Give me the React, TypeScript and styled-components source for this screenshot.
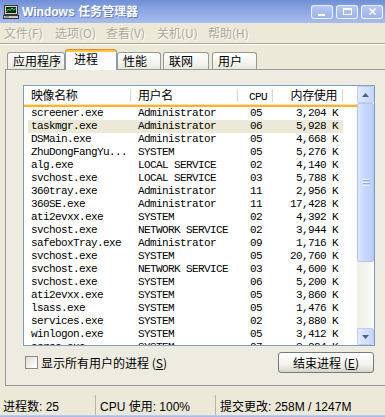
import React from "react";
import styled, { createGlobalStyle, css } from "styled-components";

const Global = createGlobalStyle`
  html, body { margin: 0; padding: 0; background: #ece9d8; }
  body { width: 385px; height: 417px; overflow: hidden; }
`;

const CJK = `"Noto Sans CJK SC", sans-serif`;
const UI = `"Liberation Sans", "Noto Sans CJK SC", sans-serif`;
const MONO = `"Liberation Mono", "Noto Sans CJK SC", monospace`;

const Window = styled.div`
  width: 385px;
  height: 417px;
  overflow: hidden;
  display: flex;
  flex-direction: column;
  background: #ece9d8;
  font-family: ${UI};
  font-size: 12px;
  color: #000;
`;

const TitleBar = styled.div`
  height: 23px;
  flex: none;
  display: flex;
  align-items: center;
  padding: 0 2px 0 3px;
  background: linear-gradient(to bottom, #6e8ed6 0%, #84a0df 30%, #98b0e8 70%, #a8bdec 100%);
`;

const TitleText = styled.div`
  margin-left: 3px;
  color: #fff;
  font-weight: bold;
  font-size: 12px;
  line-height: 14px;
  font-family: ${UI};
  text-shadow: 1px 1px 0 rgba(40, 60, 140, 0.45);
  white-space: nowrap;
`;

const CaptionButtons = styled.div`
  margin-left: auto;
  display: flex;
  gap: 3px;
`;

const CaptionButton = styled.div`
  width: 22px;
  height: 14px;
  box-sizing: border-box;
  border: 1px solid rgba(255, 255, 255, 0.8);
  border-radius: 3px;
  background: linear-gradient(to bottom, #b6c8f2, #9bb3ea);
  display: flex;
  align-items: center;
  justify-content: center;
`;

const MenuBar = styled.div`
  height: 20px;
  flex: none;
  display: flex;
  align-items: center;
`;

const MenuItem = styled.div`
  width: 51px;
  padding-left: 4px;
  box-sizing: border-box;
  font-family: ${CJK};
  font-size: 12px;
  line-height: 16px;
  color: #aca899;
  text-shadow: 1px 1px 0 #ffffff;
  white-space: nowrap;
`;

const MenuSep = styled.div`
  flex: none;
  height: 0;
  border-top: 1px solid #aca899;
  border-bottom: 1px solid #ffffff;
`;

const Body = styled.div`
  flex: none;
  display: flex;
  flex-direction: column;
  padding: 4px 0 0 5px;
`;

const TabsRow = styled.div`
  display: flex;
  align-items: flex-end;
  height: 21px;
  padding-left: 2px;
  position: relative;
  z-index: 1;
`;

const Tab = styled.div<{ $active?: boolean; $w: number; $ml?: number }>`
  box-sizing: border-box;
  width: ${(p) => p.$w}px;
  margin-left: ${(p) => p.$ml ?? 0}px;
  font-family: ${CJK};
  font-size: 12px;
  color: #000;
  white-space: nowrap;
  border: 1px solid #919b9c;
  border-bottom: none;
  border-radius: 3px 3px 0 0;
  ${(p) =>
    p.$active
      ? css`
          height: 21px;
          padding: 2px 0 0 8px;
          line-height: 14px;
          border-top-color: #e68b2c;
          background: linear-gradient(to bottom, #ffc73c 0, #ffc73c 2px, #fcfcfe 2px);
        `
      : css`
          height: 17px;
          margin-bottom: 1px;
          padding-left: 5px;
          line-height: 16px;
          background: linear-gradient(to bottom, #ffffff 0%, #f6f5f0 50%, #e9e7de 100%);
        `}
`;

const Panel = styled.div`
  box-sizing: border-box;
  width: 383px;
  height: 317px;
  margin-top: -1px;
  border: 1px solid #919b9c;
  background: #eeece1;
  padding: 15px 0 0 17px;
  display: flex;
  flex-direction: column;
`;

const ListView = styled.div`
  box-sizing: border-box;
  width: 352px;
  height: 261px;
  border: 1px solid #7f9db9;
  background: #ffffff;
  display: flex;
  overflow: hidden;
`;

const ListMain = styled.div`
  flex: 1;
  display: flex;
  flex-direction: column;
  overflow: hidden;
`;

const Header = styled.div`
  flex: none;
  height: 18px;
  display: flex;
  background: #ffffff;
`;

const HeaderCell = styled.div<{ $w?: number; $pl?: number; $pr?: number; $right?: boolean; $last?: boolean }>`
  position: relative;
  box-sizing: border-box;
  ${(p) => (p.$w ? `width: ${p.$w}px; flex: none;` : `flex: 1;`)}
  padding-left: ${(p) => p.$pl ?? 0}px;
  padding-right: ${(p) => p.$pr ?? 0}px;
  text-align: ${(p) => (p.$right ? "right" : "left")};
  font-family: ${CJK};
  font-size: 12px;
  line-height: 18px;
  letter-spacing: -0.4px;
  white-space: nowrap;
  ${(p) =>
    !p.$last &&
    css`
      &::after {
        content: "";
        position: absolute;
        right: 0;
        top: 3px;
        bottom: 2px;
        width: 1px;
        background: #d9d6cb;
      }
    `}
`;

const MonoText = styled.span`
  font-family: ${MONO};
  font-size: 11px;
  letter-spacing: -0.6px;
`;

const HeaderLine = styled.div`
  flex: none;
  height: 3px;
  background: linear-gradient(to bottom, #fde1a0 0, #fde1a0 1px, #f7b434 1px);
`;

const Row = styled.div<{ $selected?: boolean }>`
  flex: none;
  display: grid;
  grid-template-columns: 103px 107px 35px 70px;
  width: 315px;
  margin-left: 4px;
  height: 13px;
  background: ${(p) => (p.$selected ? "#ece9d8" : "transparent")};
`;

const Cell = styled.div<{ $pl?: number; $pr?: number; $right?: boolean }>`
  padding-left: ${(p) => p.$pl ?? 0}px;
  padding-right: ${(p) => p.$pr ?? 0}px;
  text-align: ${(p) => (p.$right ? "right" : "left")};
  font-family: ${MONO};
  font-size: 11px;
  letter-spacing: -0.6px;
  line-height: 13px;
  white-space: nowrap;
  overflow: hidden;
`;

const ScrollBar = styled.div`
  flex: none;
  width: 17px;
  display: flex;
  flex-direction: column;
  background: linear-gradient(to right, #eeede5, #fcfcf8);
`;

const ScrollButton = styled.div`
  flex: none;
  box-sizing: border-box;
  width: 17px;
  height: 17px;
  border: 1px solid #bccdf3;
  border-radius: 2px;
  background: linear-gradient(to right, #e2ebfe, #c6d6fc);
  display: flex;
  align-items: center;
  justify-content: center;
`;

const Thumb = styled.div`
  flex: none;
  box-sizing: border-box;
  height: 159px;
  border: 1px solid #b2c6f3;
  border-radius: 2px;
  background: linear-gradient(to right, #dfe8fd 0%, #c9d8fc 40%, #bccefb 100%);
  display: flex;
  align-items: center;
  justify-content: center;
`;

const Track = styled.div`
  flex: 1;
`;

const BottomRow = styled.div`
  width: 351px;
  margin-top: 6px;
  height: 21px;
  display: flex;
  align-items: center;
  justify-content: space-between;
`;

const CheckLabel = styled.div`
  display: flex;
  align-items: center;
  gap: 3px;
  margin-left: 2px;
  font-family: ${CJK};
  font-size: 12px;
  line-height: 14px;
  white-space: nowrap;
`;

const CheckBox = styled.div`
  width: 13px;
  height: 13px;
  box-sizing: border-box;
  border: 1px solid #8a8b8d;
  background: linear-gradient(135deg, #dcdcd6 0%, #f4f4f1 60%, #ffffff 100%);
`;

const Key = styled.span`
  text-decoration: underline;
`;

const Button = styled.div`
  box-sizing: border-box;
  width: 96px;
  height: 21px;
  border: 1px solid #767b82;
  border-radius: 3px;
  background: linear-gradient(to bottom, #ffffff 0%, #f5f4ef 55%, #e4e2d8 85%, #d6d3c6 100%);
  display: flex;
  align-items: center;
  justify-content: center;
  font-family: ${CJK};
  font-size: 12px;
  line-height: 14px;
  white-space: nowrap;
`;

const StatusBar = styled.div`
  flex: none;
  height: 29px;
  box-sizing: border-box;
  padding-top: 9px;
  display: flex;
`;

const StatusPane = styled.div<{ $w?: number; $pl: number; $sep?: boolean }>`
  box-sizing: border-box;
  ${(p) => (p.$w ? `width: ${p.$w}px; flex: none;` : `flex: 1;`)}
  padding-left: ${(p) => p.$pl}px;
  height: 20px;
  display: flex;
  align-items: center;
  font-family: ${UI};
  font-size: 12px;
  white-space: nowrap;
  border-right: ${(p) => (p.$sep ? "1px solid #b9b6a6" : "none")};
`;

const FrameBottom = styled.div`
  flex: none;
  height: 2px;
  background: linear-gradient(to bottom, #c3d2f3, #9fb5e9);
`;

type Proc = [string, string, string, string];

const procs: Proc[] = [
  ["screener.exe", "Administrator", "05", "3,204 K"],
  ["taskmgr.exe", "Administrator", "06", "5,928 K"],
  ["DSMain.exe", "Administrator", "05", "4,668 K"],
  ["ZhuDongFangYu...", "SYSTEM", "05", "5,276 K"],
  ["alg.exe", "LOCAL SERVICE", "02", "4,140 K"],
  ["svchost.exe", "LOCAL SERVICE", "03", "5,788 K"],
  ["360tray.exe", "Administrator", "11", "2,956 K"],
  ["360SE.exe", "Administrator", "11", "17,428 K"],
  ["ati2evxx.exe", "SYSTEM", "02", "4,392 K"],
  ["svchost.exe", "NETWORK SERVICE", "02", "3,944 K"],
  ["safeboxTray.exe", "Administrator", "09", "1,716 K"],
  ["svchost.exe", "SYSTEM", "05", "20,760 K"],
  ["svchost.exe", "NETWORK SERVICE", "03", "4,600 K"],
  ["svchost.exe", "SYSTEM", "06", "5,200 K"],
  ["ati2evxx.exe", "SYSTEM", "05", "3,860 K"],
  ["lsass.exe", "SYSTEM", "05", "1,476 K"],
  ["services.exe", "SYSTEM", "02", "3,880 K"],
  ["winlogon.exe", "SYSTEM", "05", "3,412 K"],
  ["csrss.exe", "SYSTEM", "07", "3,924 K"],
];

const AppIcon = () => (
  <svg width="16" height="16" viewBox="0 0 16 16">
    <rect x="1.5" y="1.5" width="13" height="9" fill="#d2d0c8" stroke="#3a3a3a" />
    <rect x="3" y="3" width="10" height="6" fill="#0a2a14" />
    <polyline points="3.5,7.5 5.5,5 7,6.5 9,4 10.5,6 12.5,4.5" fill="none" stroke="#39f06a" strokeWidth="1" />
    <rect x="0.5" y="11.5" width="15" height="3" fill="#c9c9c4" stroke="#3a3a3a" />
    <rect x="2" y="12.5" width="4" height="1" fill="#6a6a6a" />
  </svg>
);

export default function App() {
  return (
    <>
      <Global />
      <Window>
        <TitleBar>
          <AppIcon />
          <TitleText>Windows 任务管理器</TitleText>
          <CaptionButtons>
            <CaptionButton>
              <svg width="20" height="12" viewBox="0 0 20 12">
                <rect x="6" y="8" width="7" height="2" fill="#fff" />
              </svg>
            </CaptionButton>
            <CaptionButton>
              <svg width="20" height="12" viewBox="0 0 20 12">
                <rect x="6.5" y="2.5" width="8" height="6" fill="none" stroke="#fff" />
                <rect x="6" y="2" width="9" height="2" fill="#fff" />
              </svg>
            </CaptionButton>
            <CaptionButton>
              <svg width="20" height="12" viewBox="0 0 20 12">
                <path d="M7.5 2.5 L13.5 8.5 M13.5 2.5 L7.5 8.5" stroke="#fff" strokeWidth="1.6" />
              </svg>
            </CaptionButton>
          </CaptionButtons>
        </TitleBar>

        <MenuBar>
          <MenuItem>文件(F)</MenuItem>
          <MenuItem>选项(O)</MenuItem>
          <MenuItem>查看(V)</MenuItem>
          <MenuItem>关机(U)</MenuItem>
          <MenuItem>帮助(H)</MenuItem>
        </MenuBar>
        <MenuSep />

        <Body>
          <TabsRow>
            <Tab $w={58}>应用程序</Tab>
            <Tab $w={52} $active>进程</Tab>
            <Tab $w={44}>性能</Tab>
            <Tab $w={46} $ml={2}>联网</Tab>
            <Tab $w={45} $ml={3}>用户</Tab>
          </TabsRow>
          <Panel>
            <ListView>
              <ListMain>
                <Header>
                  <HeaderCell $w={107} $pl={7}>映像名称</HeaderCell>
                  <HeaderCell $w={107} $pl={7}>用户名</HeaderCell>
                  <HeaderCell $w={35} $pl={11}>
                    <MonoText>CPU</MonoText>
                  </HeaderCell>
                  <HeaderCell $w={70} $pr={6} $right>内存使用</HeaderCell>
                  <HeaderCell $last />
                </Header>
                <HeaderLine />
                {procs.map((p, i) => (
                  <Row key={i} $selected={i === 1}>
                    <Cell $pl={3}>{p[0]}</Cell>
                    <Cell $pl={7}>{p[1]}</Cell>
                    <Cell $pl={12}>{p[2]}</Cell>
                    <Cell $pr={5} $right>{p[3]}</Cell>
                  </Row>
                ))}
              </ListMain>
              <ScrollBar>
                <ScrollButton>
                  <svg width="7" height="4" viewBox="0 0 7 4">
                    <polygon points="0,4 3.5,0 7,4" fill="#4d6185" />
                  </svg>
                </ScrollButton>
                <Thumb>
                  <svg width="8" height="7" viewBox="0 0 8 7">
                    <rect x="0" y="0" width="7" height="1" fill="#eef4fe" />
                    <rect x="1" y="1" width="7" height="1" fill="#8aa9ea" />
                    <rect x="0" y="3" width="7" height="1" fill="#eef4fe" />
                    <rect x="1" y="4" width="7" height="1" fill="#8aa9ea" />
                    <rect x="0" y="6" width="7" height="1" fill="#eef4fe" />
                  </svg>
                </Thumb>
                <Track />
                <ScrollButton>
                  <svg width="7" height="4" viewBox="0 0 7 4">
                    <polygon points="0,0 7,0 3.5,4" fill="#4d6185" />
                  </svg>
                </ScrollButton>
              </ScrollBar>
            </ListView>
            <BottomRow>
              <CheckLabel>
                <CheckBox />
                <span>
                  显示所有用户的进程 (<Key>S</Key>)
                </span>
              </CheckLabel>
              <Button>
                结束进程 (<Key>E</Key>)
              </Button>
            </BottomRow>
          </Panel>
        </Body>

        <StatusBar>
          <StatusPane $w={96} $pl={3} $sep>进程数: 25</StatusPane>
          <StatusPane $w={120} $pl={4} $sep>CPU 使用: 100%</StatusPane>
          <StatusPane $pl={4}>提交更改: 258M / 1247M</StatusPane>
        </StatusBar>
        <FrameBottom />
      </Window>
    </>
  );
}
